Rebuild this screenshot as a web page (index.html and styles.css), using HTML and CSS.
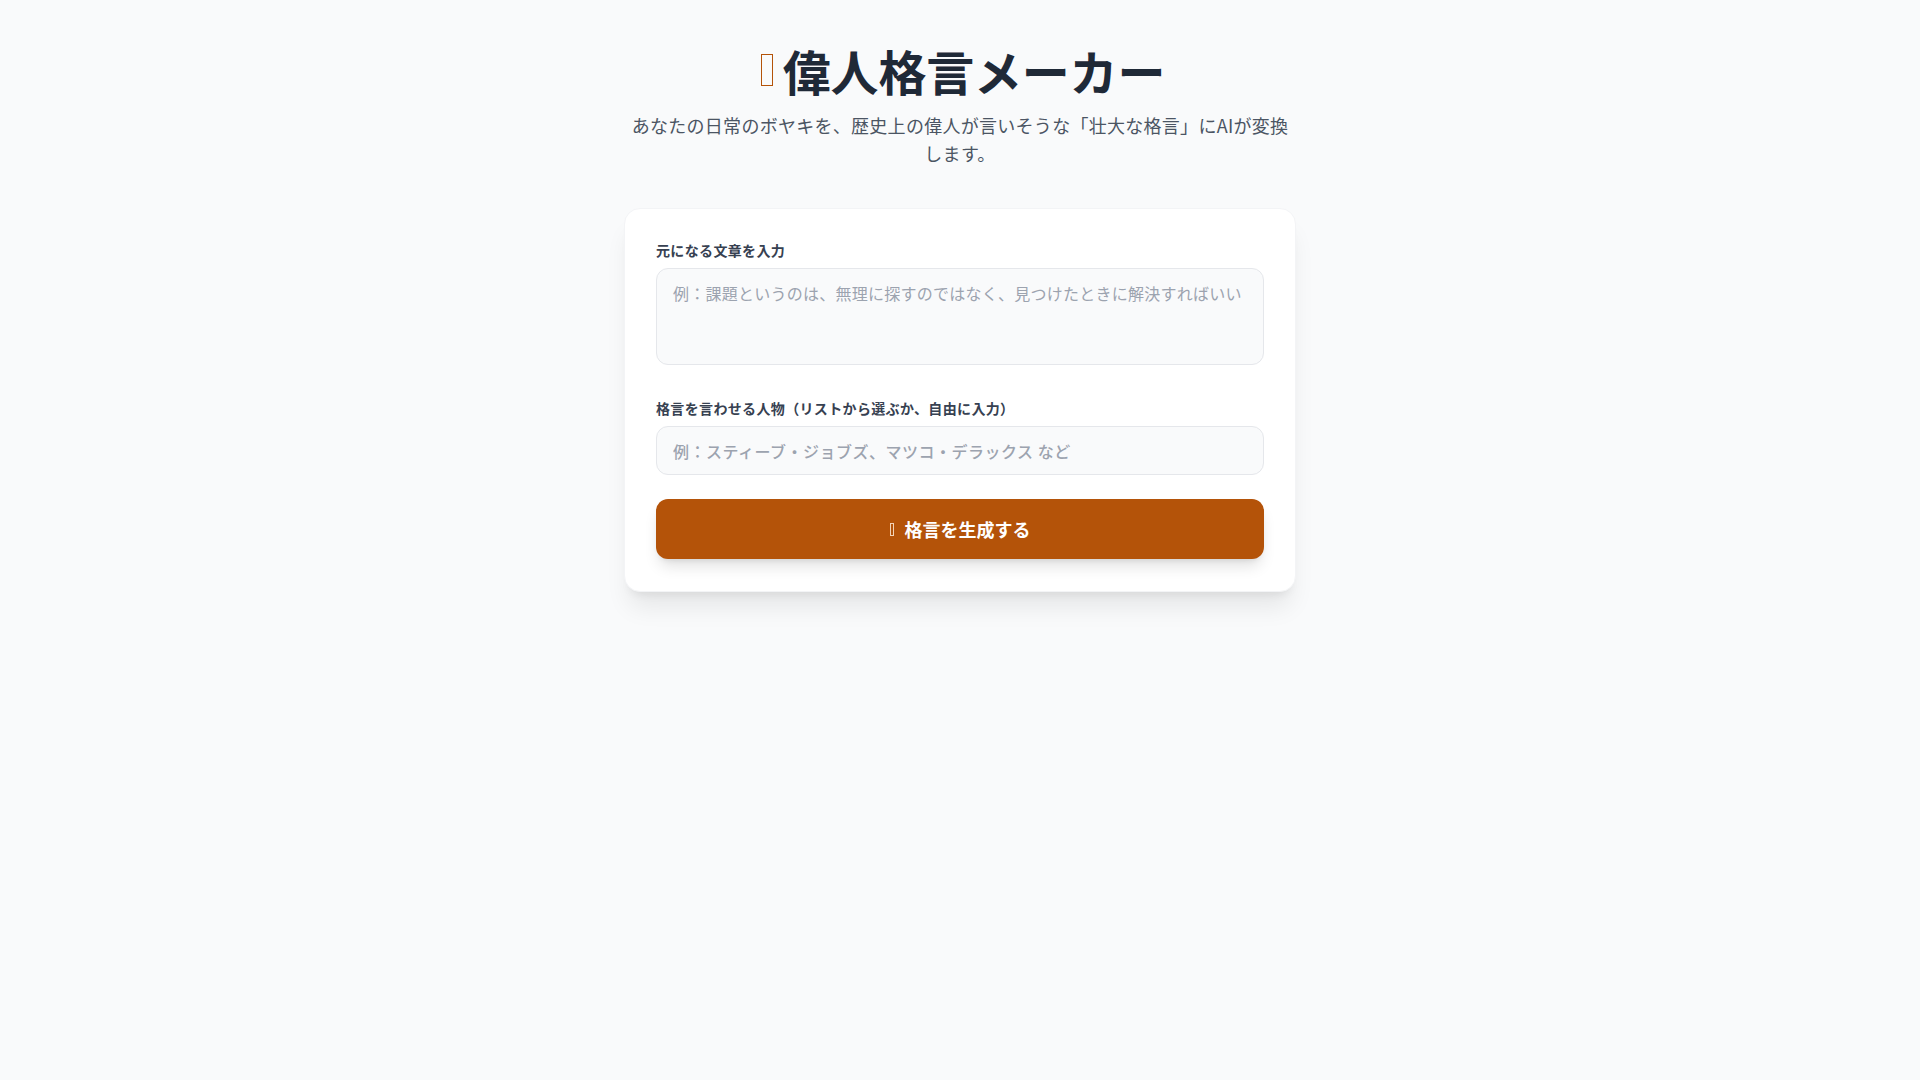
FILE: index.html
```html
<!DOCTYPE html>
<html lang="ja">
<head>
<meta charset="utf-8">
<title>偉人格言メーカー</title>
<link rel="stylesheet" href="styles.css">
</head>
<body>
<main class="page">
  <header class="hero">
    <h1 class="title"><span class="tofu tofu-title"></span>偉人格言メーカー</h1>
    <p class="lead">あなたの日常のボヤキを、歴史上の偉人が言いそうな「壮大な格言」にAIが変換します。</p>
  </header>
  <section class="card">
    <div class="field">
      <label class="label" for="src">元になる文章を入力</label>
      <textarea id="src" class="textarea" rows="3" placeholder="例：課題というのは、無理に探すのではなく、見つけたときに解決すればいい"></textarea>
    </div>
    <div class="field field-second">
      <label class="label" for="who">格言を言わせる人物（リストから選ぶか、自由に入力）</label>
      <input id="who" class="input" type="text" placeholder="例：スティーブ・ジョブズ、マツコ・デラックス など">
    </div>
    <button class="button" type="button"><span class="tofu tofu-btn"></span>格言を生成する</button>
  </section>
</main>
</body>
</html>
```

FILE: styles.css
```css
* { box-sizing: border-box; }
html, body { margin: 0; padding: 0; }
body {
  background: #f9fafb;
  font-family: "Noto Sans CJK JP", "Noto Sans", sans-serif;
  color: #1f2937;
}
.page {
  max-width: 672px;
  margin: 0 auto;
  padding: 46px 0 48px;
}
.hero { text-align: center; margin-bottom: 41px; }
.title {
  margin: 0 0 17px;
  font-size: 48px;
  line-height: 48px;
  font-weight: 700;
  color: #1f2937;
  display: flex;
  justify-content: center;
  align-items: center;
  letter-spacing: -0.2px;
}
.tofu {
  display: inline-block;
  border: 1.5px solid currentColor;
  flex: none;
}
.tofu-title {
  width: 12px;
  height: 32px;
  color: #b45309;
  margin: 0 10px 0 6px;
  border-width: 1.5px;
}
.lead {
  margin: 0 auto;
  font-size: 18px;
  line-height: 28px;
  color: #4b5563;
  letter-spacing: 0.28px;
}
.card {
  background: #fff;
  border: 1px solid #f3f4f6;
  border-radius: 16px;
  padding: 31px 31px 32px;
  box-shadow: 0 20px 25px -5px rgba(0,0,0,0.08), 0 8px 10px -6px rgba(0,0,0,0.08);
}
.field { display: flex; flex-direction: column; }
.field-second { margin-top: 33px; }
.label {
  font-size: 14px;
  line-height: 20px;
  font-weight: 700;
  color: #374151;
  margin-bottom: 8px;
  letter-spacing: 0.35px;
}
.textarea, .input {
  display: block;
  width: 100%;
  font-family: inherit;
  font-size: 16px;
  line-height: 24px;
  padding: 12px 16px;
  background: #f9fafb;
  border: 1px solid #e5e7eb;
  border-radius: 12px;
  color: #1f2937;
  outline: none;
  letter-spacing: 0.25px;
}
.textarea { resize: none; height: 97px; }
.input { height: 49px; font-weight: 500; letter-spacing: 0.5px; }
.textarea::placeholder, .input::placeholder { color: #9ca3af; opacity: 1; }
.button {
  margin-top: 24px;
  width: 100%;
  height: 60px;
  border: none;
  border-radius: 12px;
  background: #b45309;
  color: #fff;
  font-family: inherit;
  font-size: 18px;
  font-weight: 700;
  display: flex;
  align-items: center;
  justify-content: center;
  box-shadow: 0 10px 15px -3px rgba(0,0,0,0.12), 0 4px 6px -4px rgba(0,0,0,0.12);
  cursor: pointer;
}
.tofu-btn {
  width: 4px;
  height: 13px;
  border-width: 1px;
  color: #f3d3b5;
  margin-right: 11px;
}
```
